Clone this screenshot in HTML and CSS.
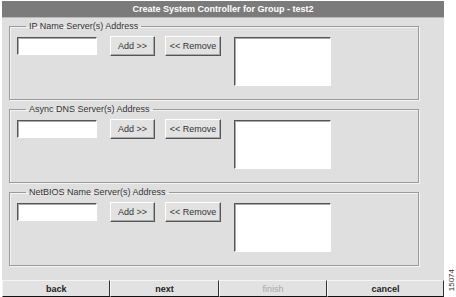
FILE: index.html
```html
<!DOCTYPE html>
<html lang="en">
<head>
  <meta charset="UTF-8" />
  <title>Create System Controller for Group - test2</title>
  <link rel="stylesheet" href="styles.css">
</head>
<body>

  <div class="page">
    <div class="window">
      <div class="titlebar">Create System Controller for Group - test2</div>

      <div class="content">
        <fieldset>
          <legend>IP Name Server(s) Address</legend>
          <div class="row">
            <input type="text" class="addr">
            <button class="add">Add &gt;&gt;</button>
            <button class="remove">&lt;&lt; Remove</button>
            <div class="listbox"></div>
          </div>
        </fieldset>

        <fieldset>
          <legend>Async DNS Server(s) Address</legend>
          <div class="row">
            <input type="text" class="addr">
            <button class="add">Add &gt;&gt;</button>
            <button class="remove">&lt;&lt; Remove</button>
            <div class="listbox"></div>
          </div>
        </fieldset>

        <fieldset>
          <legend>NetBIOS Name Server(s) Address</legend>
          <div class="row">
            <input type="text" class="addr">
            <button class="add">Add &gt;&gt;</button>
            <button class="remove">&lt;&lt; Remove</button>
            <div class="listbox"></div>
          </div>
        </fieldset>
      </div>

      <div class="navbar">
        <button class="nav">back</button>
        <button class="nav">next</button>
        <button class="nav disabled">finish</button>
        <button class="nav last">cancel</button>
      </div>
    </div>

    <div class="figno">15074</div>
  </div>

</body>
</html>
```

FILE: styles.css
```css
body {
  margin: 0;
  background: #fff;
  font-family: 'Liberation Sans', Arial, sans-serif;
  font-size: 9px;
  color: #222;
}

.page {
  display: flex;
  align-items: flex-end;
  padding: 1px 0 0 2px;
}

.window {
  width: 442px;
  height: 296px;
  background: #dfdfdf;
  display: flex;
  flex-direction: column;
}

.titlebar {
  height: 16px;
  line-height: 16px;
  background: #7b7b7b;
  color: #fff;
  font-weight: bold;
  text-align: center;
  border-bottom: 1px solid #b8b8b8;
}

.content {
  flex: 1;
  padding: 3px 25px 0 7px;
  display: flex;
  flex-direction: column;
  gap: 4px;
}

fieldset {
  margin: 0;
  padding: 4px 7px 0 7px;
  height: 73px;
  border: 1px solid #9a9a9a;
  box-shadow: inset 1px 1px 0 #f4f4f4, 1px 1px 0 #f4f4f4;
}

legend {
  padding: 0 3px;
  margin-left: 9px;
  line-height: 11px;
  color: #333;
}

.row {
  display: flex;
  align-items: flex-start;
}

.addr {
  box-sizing: border-box;
  width: 80px;
  height: 18px;
  margin: 1px 13px 0 0;
  padding: 0;
  background: #fff;
  border: 1px solid;
  border-color: #555 #fff #fff #555;
  box-shadow: inset 1px 1px 0 #aaa;
}

.add, .remove {
  box-sizing: border-box;
  height: 20px;
  padding: 0;
  font-family: inherit;
  font-size: 9px;
  color: #333;
  background: #e2e2e2;
  border: 1px solid;
  border-color: #fff #555 #555 #fff;
  box-shadow: inset -1px -1px 0 #a8a8a8;
}

.add {
  width: 45px;
  margin-right: 10px;
}

.remove {
  width: 56px;
  margin-right: 13px;
}

.listbox {
  box-sizing: border-box;
  width: 97px;
  height: 49px;
  margin-top: 1px;
  background: #fff;
  border: 1px solid;
  border-color: #555 #fff #fff #555;
  box-shadow: inset 1px 1px 0 #aaa;
}

.navbar {
  display: flex;
  height: 17px;
}

.nav {
  flex: 1;
  box-sizing: border-box;
  padding: 0;
  font-family: inherit;
  font-size: 9px;
  font-weight: bold;
  color: #222;
  background: #e2e2e2;
  border: 1px solid;
  border-color: #f4f4f4 #333 #111 #f4f4f4;
}

.nav.last {
  flex: 1.08;
}

.nav.disabled {
  font-weight: normal;
  color: #a8a8a8;
}

.figno {
  writing-mode: vertical-rl;
  transform: rotate(180deg);
  font-size: 8px;
  color: #333;
  margin: 0 0 6px 3px;
}
```
